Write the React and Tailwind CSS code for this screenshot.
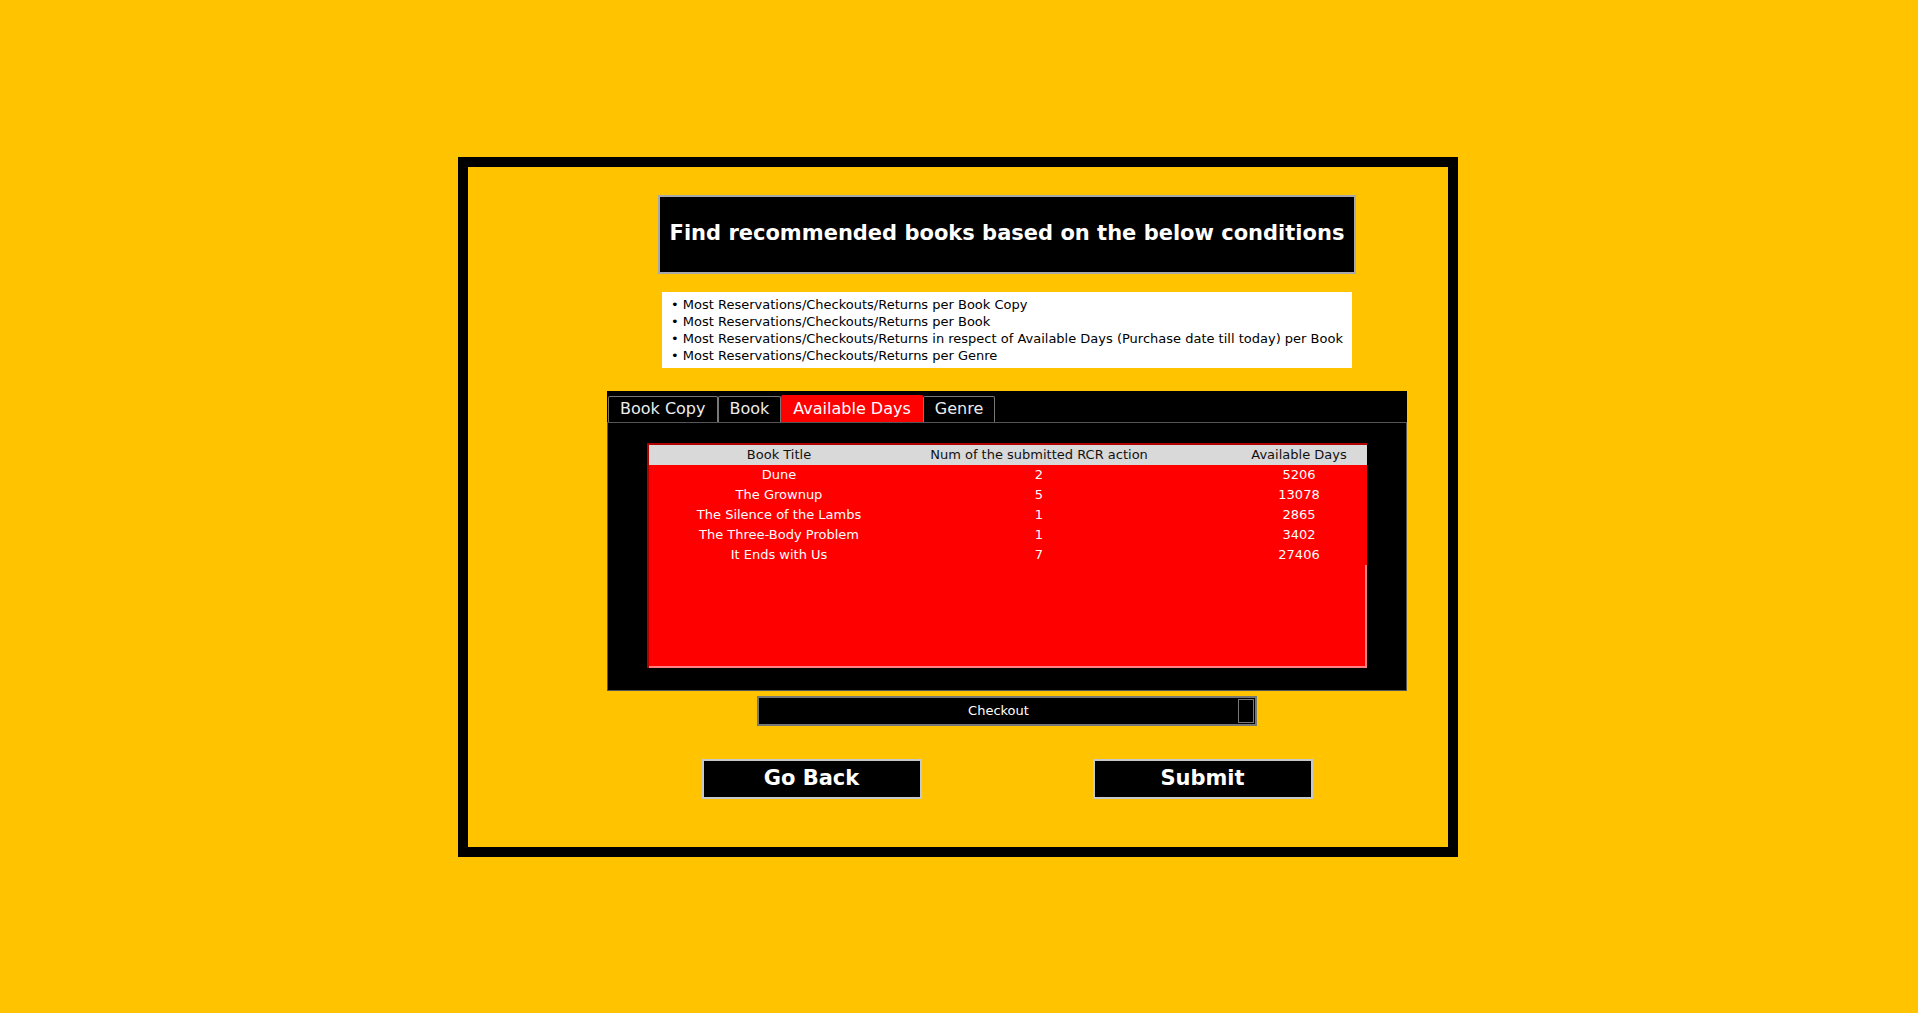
import React, { useState } from 'react';

const tabs = ['Book Copy', 'Book', 'Available Days', 'Genre'];

const rows = [
  { title: 'Dune', num: 2, days: 5206 },
  { title: 'The Grownup', num: 5, days: 13078 },
  { title: 'The Silence of the Lambs', num: 1, days: 2865 },
  { title: 'The Three-Body Problem', num: 1, days: 3402 },
  { title: 'It Ends with Us', num: 7, days: 27406 },
];

const conditions = [
  'Most Reservations/Checkouts/Returns per Book Copy',
  'Most Reservations/Checkouts/Returns per Book',
  'Most Reservations/Checkouts/Returns in respect of Available Days (Purchase date till today) per Book',
  'Most Reservations/Checkouts/Returns per Genre',
];

export default function App() {
  const [active, setActive] = useState('Available Days');

  return (
    <div className="w-full h-[1013px] bg-[#ffc300] flex items-center justify-center pr-[2px] font-['DejaVu_Sans',sans-serif]">
      <div className="w-[1000px] h-[700px] border-[10px] border-black flex flex-col items-center pl-[98px] pt-[28px]">
        <div className="w-[698px] h-[79px] bg-black border-2 border-[#a9a9a9] flex items-center justify-center">
          <span className="text-white font-bold text-[21px]">Find recommended books based on the below conditions</span>
        </div>

        <div className="w-[690px] mt-[18px] bg-white pl-[9px] pr-[5px] py-[4px] text-[13px] leading-[17px] text-black">
          {conditions.map((c) => (
            <div key={c}>• {c}</div>
          ))}
        </div>

        <div className="w-[800px] h-[300px] mt-[23px] bg-black flex flex-col">
          <div className="flex items-end pl-[1px] h-[31px]">
            {tabs.map((t) => (
              <button
                key={t}
                onClick={() => setActive(t)}
                className={`px-[11px] border border-b-0 rounded-t-[2px] text-[16px] ${
                  active === t
                    ? 'bg-[#ff0000] text-white border-[#ff0000] h-[27px]'
                    : 'bg-black text-[#ececec] border-[#777] h-[26px]'
                }`}
              >
                {t}
              </button>
            ))}
          </div>
          <div className="flex-1 border border-[#555] px-[39px] pt-[20px] pb-[22px]">
            <div className="w-[720px] h-[225px] bg-[#ff0000] border-t-2 border-l-2 border-[#b00000] relative overflow-hidden text-[13px]">
              <div className="flex w-[780px] h-[20px] bg-[#d9d9d9] text-[#111] items-center">
                <div className="w-[260px] text-center">Book Title</div>
                <div className="w-[260px] text-center">Num of the submitted RCR action</div>
                <div className="w-[260px] text-center">Available Days</div>
              </div>
              {rows.map((r) => (
                <div key={r.title} className="flex w-[780px] h-[20px] items-center text-white">
                  <div className="w-[260px] text-center">{r.title}</div>
                  <div className="w-[260px] text-center">{r.num}</div>
                  <div className="w-[260px] text-center">{r.days}</div>
                </div>
              ))}
              <div className="absolute right-0 top-[120px] bottom-0 w-[2px] bg-[#ff8080]" />
              <div className="absolute left-0 right-0 bottom-0 h-[2px] bg-[#ff8080]" />
            </div>
          </div>
        </div>

        <div className="w-[500px] h-[30px] mt-[5px] bg-black border-2 border-[#777] flex items-center relative">
          <span className="flex-1 text-center text-white text-[13px]">Checkout</span>
          <div className="w-[16px] h-[24px] border border-[#777] mr-[1px]" />
        </div>

        <div className="flex gap-[171px] mt-[33px]">
          <button className="w-[220px] h-[40px] bg-black border-2 border-[#c8c8c8] text-white font-bold text-[21px]">Go Back</button>
          <button className="w-[220px] h-[40px] bg-black border-2 border-[#c8c8c8] text-white font-bold text-[21px]">Submit</button>
        </div>
      </div>
    </div>
  );
}
